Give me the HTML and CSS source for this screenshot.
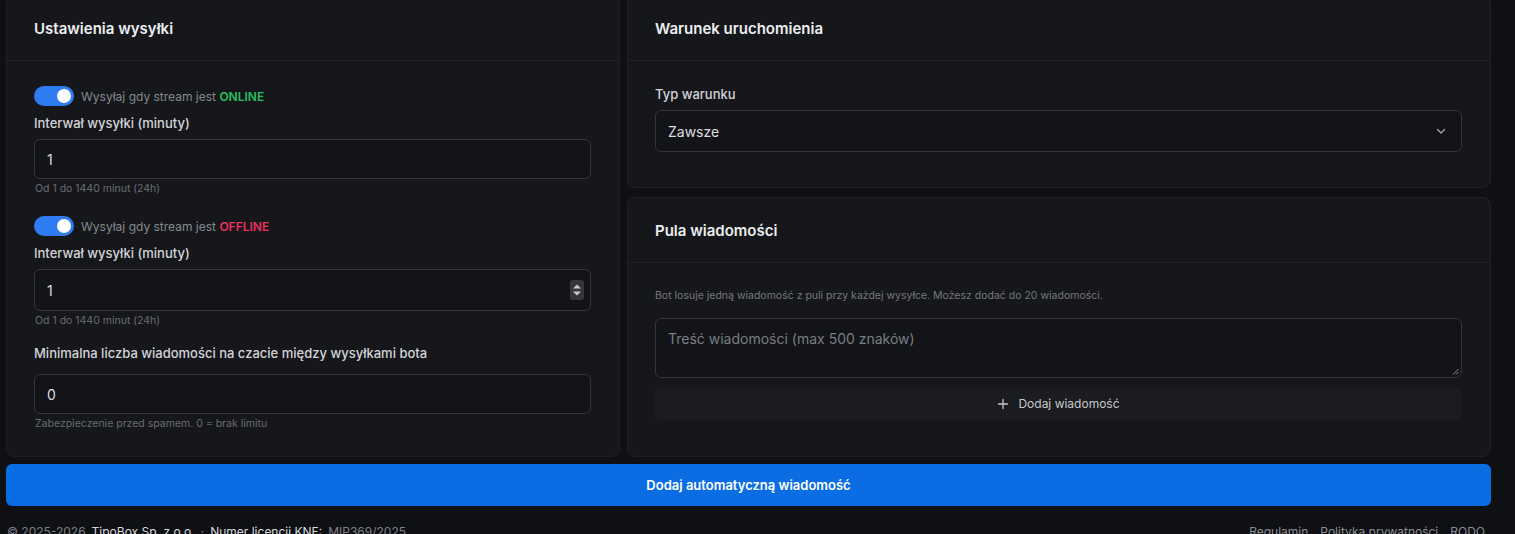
FILE: index.html
```html
<!DOCTYPE html>
<html lang="pl">
<head>
    <meta charset="UTF-8">
    <meta name="viewport" content="width=device-width, initial-scale=1.0">
    <title>Automatyczne wiadomości</title>
    <link rel="stylesheet" href="styles.css">
</head>
<body>
    <div class="page">
        <div class="columns">
            <!-- Left: sending settings -->
            <section class="card">
                <div class="card-header">
                    <h2>Ustawienia wysyłki</h2>
                </div>
                <div class="card-body">
                    <label class="switch-row">
                        <span class="switch on"><span class="knob"></span></span>
                        <span class="switch-text">Wysyłaj gdy stream jest <b class="online">ONLINE</b></span>
                    </label>
                    <div class="field">
                        <label class="label">Interwał wysyłki (minuty)</label>
                        <div class="input">1</div>
                        <p class="hint">Od 1 do 1440 minut (24h)</p>
                    </div>

                    <label class="switch-row">
                        <span class="switch on"><span class="knob"></span></span>
                        <span class="switch-text">Wysyłaj gdy stream jest <b class="offline">OFFLINE</b></span>
                    </label>
                    <div class="field tight">
                        <label class="label">Interwał wysyłki (minuty)</label>
                        <div class="input tall">
                            <span>1</span>
                            <span class="spinner">
                                <svg width="10" height="14" viewBox="0 0 10 14"><path d="M5 1.5 9 5.5H1z" fill="#c9cace"/><path d="M5 12.5 9 8.5H1z" fill="#c9cace"/></svg>
                            </span>
                        </div>
                        <p class="hint">Od 1 do 1440 minut (24h)</p>
                    </div>

                    <div class="field last">
                        <label class="label">Minimalna liczba wiadomości na czacie między wysyłkami bota</label>
                        <div class="input">0</div>
                        <p class="hint">Zabezpieczenie przed spamem. 0 = brak limitu</p>
                    </div>
                </div>
            </section>

            <div class="stack">
                <!-- Right top: trigger condition -->
                <section class="card">
                    <div class="card-header">
                        <h2>Warunek uruchomienia</h2>
                    </div>
                    <div class="card-body condition">
                        <label class="label">Typ warunku</label>
                        <div class="input select">
                            <span>Zawsze</span>
                            <svg width="12" height="12" viewBox="0 0 12 12"><path d="M2.5 4.5 6 8l3.5-3.5" fill="none" stroke="#a4a6ab" stroke-width="1.3" stroke-linecap="round" stroke-linejoin="round"/></svg>
                        </div>
                    </div>
                </section>

                <!-- Right bottom: message pool -->
                <section class="card grow">
                    <div class="card-header">
                        <h2>Pula wiadomości</h2>
                    </div>
                    <div class="card-body">
                        <p class="note">Bot losuje jedną wiadomość z puli przy każdej wysyłce. Możesz dodać do 20 wiadomości.</p>
                        <div class="textarea">
                            <span class="placeholder">Treść wiadomości (max 500 znaków)</span>
                            <svg class="resize" width="7" height="7" viewBox="0 0 7 7"><path d="M6.5 1 1 6.5M6.5 4 4 6.5" stroke="#8d8f94" stroke-width="1"/></svg>
                        </div>
                        <button class="add-msg">
                            <svg width="12" height="12" viewBox="0 0 12 12"><path d="M6 1.5v9M1.5 6h9" stroke="#c3c5c9" stroke-width="1.3" stroke-linecap="round"/></svg>
                            Dodaj wiadomość
                        </button>
                    </div>
                </section>
            </div>
        </div>

        <button class="submit">Dodaj automatyczną wiadomość</button>

        <footer class="footer">
            <div class="footer-left">
                <span class="muted">© 2025-2026</span>
                <span>TipoBox Sp. z o.o.</span>
                <span class="muted">·</span>
                <span>Numer licencji KNF:</span>
                <span class="muted">MIP369/2025</span>
            </div>
            <div class="footer-links">
                <a href="#">Regulamin</a>
                <a href="#">Polityka prywatności</a>
                <a href="#">RODO</a>
            </div>
        </footer>
    </div>
</body>
</html>
```

FILE: styles.css
```css
body {
    margin: 0;
    background-color: #0f1014;
    font-family: Inter, "Noto Sans", sans-serif;
    color: #e6e7ea;
    overflow: hidden;
}
.page {
    width: 1485px;
    margin: -5px 0 0 6px;
}
.columns {
    display: grid;
    grid-template-columns: 614px 1fr;
    gap: 7px;
}
.stack {
    display: flex;
    flex-direction: column;
    gap: 9px;
}
.card {
    background: #16171b;
    border: 1px solid #1e2024;
    border-radius: 8px;
}
.card.grow {
    flex: 1;
}
.card-header {
    height: 64px;
    display: flex;
    align-items: center;
    padding: 0 27px;
    border-bottom: 1px solid #202226;
}
.card-header h2 {
    margin: 0;
    font-size: 15px;
    font-weight: 600;
    color: #eceef0;
}
.card-body {
    padding: 25px 28px 25px 27px;
}
.card-body.condition {
    padding-top: 24px;
    padding-bottom: 35px;
}
.switch-row {
    display: flex;
    align-items: center;
    gap: 7px;
    margin-bottom: 8px;
}
.switch {
    width: 40px;
    height: 20px;
    border-radius: 10px;
    background: #2f7cf2;
    display: flex;
    align-items: center;
    justify-content: flex-end;
    padding: 0 3px;
    box-sizing: border-box;
}
.knob {
    width: 14px;
    height: 14px;
    border-radius: 50%;
    background: #ffffff;
}
.switch-text {
    font-size: 12px;
    color: #85888e;
}
.switch-text b {
    font-weight: 600;
}
.online {
    color: #23c060;
}
.offline {
    color: #ec2f5b;
}
.field {
    margin-bottom: 20px;
}
.field.tight {
    margin-bottom: 16px;
}
.field.last {
    margin-bottom: 0;
}
.field.last .label {
    margin-bottom: 12px;
}
.label {
    display: block;
    font-size: 13px;
    line-height: 18px;
    font-weight: 500;
    color: #d3d4d8;
    margin-bottom: 7px;
}
.input {
    height: 40px;
    box-sizing: border-box;
    border: 1px solid #33353a;
    border-radius: 6px;
    background: #131418;
    display: flex;
    align-items: center;
    justify-content: space-between;
    padding: 0 12px;
    font-size: 14px;
    color: #dcdde0;
}
.input.tall {
    height: 42px;
}
.input.select {
    height: 42px;
    padding-right: 14px;
}
.spinner {
    width: 14px;
    height: 20px;
    border-radius: 3px;
    background: #34363b;
    display: flex;
    align-items: center;
    justify-content: center;
    margin-right: -6px;
}
.hint {
    margin: 3px 0 0 1px;
    font-size: 10.5px;
    line-height: 14px;
    color: #696c72;
}
.note {
    margin: 0 0 14px;
    font-size: 10.5px;
    line-height: 16px;
    color: #75787e;
}
.textarea {
    position: relative;
    height: 60px;
    box-sizing: border-box;
    border: 1px solid #33353a;
    border-radius: 6px;
    background: #131418;
    padding: 11px 12px;
    font-size: 14px;
}
.placeholder {
    color: #7a7d83;
}
.resize {
    position: absolute;
    right: 2px;
    bottom: 2px;
}
.add-msg {
    width: 100%;
    height: 33px;
    margin-top: 9px;
    border: none;
    border-radius: 6px;
    background: #1b1c20;
    color: #c6c8cc;
    font-family: inherit;
    font-size: 12px;
    display: flex;
    align-items: center;
    justify-content: center;
    gap: 9px;
}
.submit {
    display: block;
    width: 100%;
    height: 42px;
    margin-top: 7px;
    border: none;
    border-radius: 6px;
    background: #0a6de3;
    color: #ffffff;
    font-family: inherit;
    font-size: 13px;
    font-weight: 600;
}
.footer {
    display: flex;
    justify-content: space-between;
    padding: 18px 6px 0 1px;
    font-size: 12px;
}
.footer-left {
    display: flex;
    gap: 6px;
    color: #d8d9dc;
}
.muted {
    color: #7c7f85;
}
.footer-links {
    display: flex;
    gap: 12px;
}
.footer-links a {
    color: #8a8d93;
    text-decoration: none;
}
```
